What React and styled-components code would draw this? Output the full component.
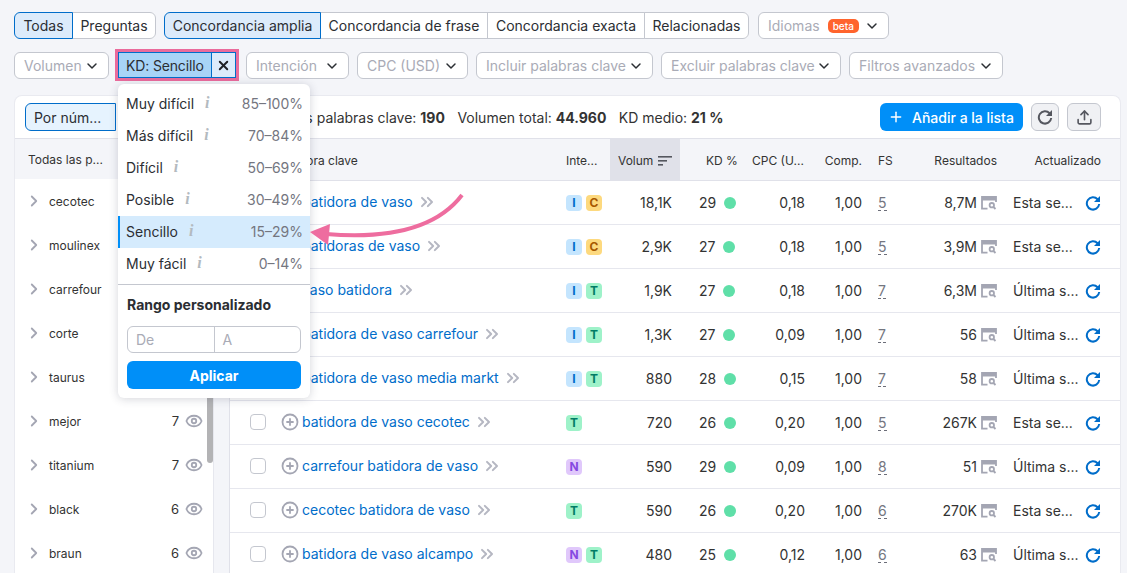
import React from 'react';
import styled, { createGlobalStyle } from 'styled-components';
import { ChevronDown, ChevronRight, ChevronsRight, CirclePlus, Eye, Plus, Upload, X } from 'lucide-react';

const GlobalStyle = createGlobalStyle`
  html, body {
    margin: 0;
    height: 573px;
    overflow: hidden;
    background: #f4f5f9;
    font-family: Inter, "Noto Sans", sans-serif;
    color: #333;
  }
  * { box-sizing: border-box; }
`;

const Page = styled.div`
  position: relative;
  width: 1127px;
  height: 573px;
  overflow: hidden;
  padding: 12px 6px 0 14px;
`;

const FilterRow = styled.div`
  display: flex;
  height: 27px;
  gap: 8px;
  margin-bottom: 13px;
`;

const Segments = styled.div`
  display: flex;
  height: 27px;
  border-radius: 6px;
  background: #fff;
`;

const Segment = styled.div`
  width: ${({ $w }) => $w}px;
  display: flex;
  align-items: center;
  justify-content: center;
  font-size: 14px;
  color: #2b2e33;
  border: 1px solid ${({ $active }) => ($active ? '#006dca' : '#c4c7cf')};
  background: ${({ $active }) => ($active ? '#dcebfb' : '#fff')};
  margin-left: -1px;
  position: relative;
  z-index: ${({ $active }) => ($active ? 1 : 0)};
  &:first-child { border-radius: 6px 0 0 6px; margin-left: 0; }
  &:last-child { border-radius: 0 6px 6px 0; }
`;

const Dropdown = styled.div`
  width: ${({ $w }) => $w}px;
  height: 27px;
  flex: none;
  display: flex;
  align-items: center;
  justify-content: space-between;
  padding: 0 2px 0 9px;
  margin-left: ${({ $ml }) => $ml || 0}px;
  font-size: 14px;
  white-space: nowrap;
  color: #a9abb6;
  background: #fff;
  border: 1px solid #c4c7cf;
  border-radius: 6px;
  svg { color: #2b2e33; flex: none; margin-right: 6px; }
`;

const Beta = styled.span`
  background: #ff642d;
  color: #fff;
  font-size: 10px;
  font-weight: 500;
  line-height: 14px;
  padding: 0 5px;
  border-radius: 5px;
  margin-left: 8px;
  margin-right: auto;
`;

const KdChip = styled.div`
  width: 118px;
  height: 26px;
  flex: none;
  display: flex;
  margin: 0 2px 0 1px;
  outline: 3px solid #ea6b9c;
  position: relative;
`;

const KdLabel = styled.div`
  flex: 1;
  display: flex;
  align-items: center;
  padding-left: 7px;
  font-size: 14px;
  letter-spacing: -0.15px;
  color: #2b2e33;
  background: #a8d4f7;
  border: 1px solid #006dca;
`;

const KdClose = styled.div`
  width: 24px;
  display: flex;
  align-items: center;
  justify-content: center;
  background: #dcebfb;
  border: 1px solid #006dca;
  border-left: none;
  color: #1f2126;
`;

const Panel = styled.div`
  height: 478px;
  margin-top: 16px;
  background: #fff;
  border-radius: 8px 8px 0 0;
  border: 1px solid #e9eaf0;
  border-bottom: none;
  display: flex;
  flex-direction: column;
`;

const Toolbar = styled.div`
  height: 43px;
  flex: none;
  display: flex;
  align-items: center;
  padding: 0 19px 0 10px;
  border-bottom: 1px solid #e0e1e9;
`;

const SortSelect = styled.div`
  width: 91px;
  height: 28px;
  display: flex;
  align-items: center;
  padding-left: 8px;
  font-size: 14px;
  color: #2b2e33;
  background: #e6f3fe;
  border: 1px solid #006dca;
  border-radius: 6px 0 0 6px;
  margin-right: 134px;
`;

const Stat = styled.span`
  font-size: 14px;
  color: #333;
  margin-right: 12.5px;
  white-space: nowrap;
  b { font-weight: 700; }
`;

const AddButton = styled.div`
  width: 143px;
  height: 28px;
  margin-left: auto;
  display: flex;
  align-items: center;
  gap: 8px;
  padding-left: 8px;
  border-radius: 6px;
  background: #008ff8;
  color: #fff;
  font-size: 14px;
  font-weight: 500;
`;

const IconButton = styled.div`
  width: ${({ $w }) => $w}px;
  height: 28px;
  margin-left: 8px;
  display: flex;
  align-items: center;
  justify-content: center;
  border: 1px solid #c4c7cf;
  border-radius: 6px;
  background: #f0f1f4;
  color: #55575f;
`;

const Body = styled.div`
  flex: 1;
  display: flex;
  min-height: 0;
  background: #f4f5f9;
`;

const Sidebar = styled.aside`
  width: 199px;
  flex: none;
  background: #fff;
  border-right: 1px solid #e6e7ee;
  position: relative;
  overflow: hidden;
`;

const SideHead = styled.div`
  height: 40px;
  display: flex;
  align-items: center;
  padding-left: 13px;
  font-size: 12px;
  color: #333;
  background: #f4f5f9;
`;

const SideRow = styled.div`
  height: 44px;
  display: flex;
  align-items: center;
  padding: 0 10px 0 10px;
  font-size: 12px;
  color: #333;
  svg { color: #a4a6b3; flex: none; }
`;

const SideLabel = styled.span`
  flex: 1;
  margin-left: 6px;
`;

const SideCount = styled.span`
  margin-right: 6px;
  font-size: 13px;
`;

const Scrollbar = styled.div`
  position: absolute;
  right: 0;
  top: 250px;
  width: 6px;
  height: 74px;
  border-radius: 3px;
  background: #b3b3b5;
`;

const Table = styled.section`
  width: 891px;
  margin-left: 15px;
  flex: none;
  background: #fff;
  border-left: 1px solid #e0e1e9;
`;

const columns = '52px 284px 44px 70px 60px 65px 57px 50px 85px 123px';

const HeadRow = styled.div`
  display: grid;
  grid-template-columns: ${columns};
  height: 42px;
  background: #f4f5f9;
  border-bottom: 1px solid #e0e1e9;
`;

const Row = styled.div`
  display: grid;
  grid-template-columns: ${columns};
  height: 44px;
  border-bottom: 1px solid #e6e7ee;
  font-size: 14px;
  color: #333;
`;

const HeadCell = styled.div`
  display: flex;
  align-items: center;
  justify-content: ${({ $right }) => ($right ? 'flex-end' : 'flex-start')};
  padding: 2px ${({ $pr }) => $pr || 0}px 0 ${({ $pl }) => $pl || 0}px;
  font-size: 12px;
  color: #333;
  white-space: nowrap;
  overflow: hidden;
  background: ${({ $sorted }) => ($sorted ? '#e0e1e9' : 'transparent')};
`;

const Cell = styled.div`
  display: flex;
  align-items: center;
  justify-content: ${({ $right }) => ($right ? 'flex-end' : 'flex-start')};
  padding: 0 ${({ $pr }) => $pr || 0}px ${({ $raised }) => ($raised ? 2 : 0)}px ${({ $pl }) => $pl || 0}px;
  gap: ${({ $gap }) => $gap || 0}px;
  white-space: nowrap;
`;

const Checkbox = styled.div`
  width: 16px;
  height: 16px;
  border: 1px solid #c4c7cf;
  border-radius: 4px;
  background: #fff;
`;

const AddIcon = styled(CirclePlus)`
  color: #a4a6b3;
  margin-left: -1px;
  flex: none;
`;

const KeywordLink = styled.span`
  color: #006dca;
  font-size: 14px;
  margin-left: 3px;
`;

const MoreIcon = styled(ChevronsRight)`
  color: #b5b7c2;
  margin-left: 4px;
`;

const SortMark = styled.svg`
  margin-left: auto;
  flex: none;
`;

const Badge = styled.span`
  width: 16px;
  height: 16px;
  display: flex;
  align-items: center;
  justify-content: center;
  border-radius: 4px;
  font-size: 12px;
  font-weight: 700;
  color: ${({ $kind }) => badgeColors[$kind][1]};
  background: ${({ $kind }) => badgeColors[$kind][0]};
`;

const Dot = styled.span`
  width: 12px;
  height: 12px;
  border-radius: 50%;
  background: #5fdfa8;
  margin-left: 8px;
`;

const SerpScore = styled.span`
  color: #74767f;
  line-height: 15px;
  border-bottom: 1px dashed #6c6e79;
`;

const UpdatedText = styled.span`
  flex: 1;
  font-size: 14px;
`;

const Popup = styled.div`
  position: absolute;
  left: 118px;
  top: 84px;
  width: 192px;
  height: 314px;
  padding-top: 4px;
  background: #fff;
  border-radius: 6px;
  box-shadow: 0 1px 10px rgba(40, 45, 70, 0.2);
  z-index: 5;
`;

const Option = styled.div`
  height: 32px;
  display: flex;
  align-items: center;
  padding: 0 7px 2px ${({ $selected }) => ($selected ? 6 : 8)}px;
  font-size: 14px;
  color: #2b2e33;
  background: ${({ $selected }) => ($selected ? '#d5ebfd' : 'transparent')};
  border-left: ${({ $selected }) => ($selected ? '2px solid #008ff8' : 'none')};
`;

const InfoMark = styled.span`
  font-family: "Liberation Serif", serif;
  font-style: italic;
  font-weight: 700;
  font-size: 16px;
  color: #b3bac0;
  margin-left: 11px;
`;

const Range = styled.span`
  margin-left: auto;
  color: #74767f;
`;

const PopupDivider = styled.div`
  height: 1px;
  margin-top: 4px;
  background: #c4c7cf;
`;

const RangeTitle = styled.div`
  padding: 11px 9px 0;
  font-size: 14px;
  line-height: 17px;
  font-weight: 700;
  color: #2b2e33;
`;

const RangeInputs = styled.div`
  display: flex;
  height: 27px;
  margin: 13px 9px 8px;
  border: 1px solid #c4c7cf;
  border-radius: 6px;
`;

const RangeInput = styled.div`
  flex: 1;
  display: flex;
  align-items: center;
  padding-left: 8px;
  font-size: 14px;
  color: #a9abb6;
  & + & { border-left: 1px solid #c4c7cf; }
`;

const Apply = styled.div`
  height: 28px;
  margin: 0 9px;
  display: flex;
  align-items: center;
  justify-content: center;
  background: #008ff8;
  border-radius: 6px;
  color: #fff;
  font-size: 14px;
  font-weight: 700;
`;

const ArrowLayer = styled.svg`
  position: absolute;
  left: 0;
  top: 0;
  z-index: 6;
  pointer-events: none;
`;

const badgeColors = {
  I: ['#c4e5fe', '#006dca'],
  C: ['#fdd97e', '#a75800'],
  T: ['#9ef2c9', '#007c65'],
  N: ['#e0c8fb', '#8649e1'],
};

const sideRows = [
  ['cecotec'],
  ['moulinex'],
  ['carrefour'],
  ['corte'],
  ['taurus'],
  ['mejor', 7],
  ['titanium', 7],
  ['black', 6],
  ['braun', 6],
];

const rows = [
  ['batidora de vaso', ['I', 'C'], '18,1K', 29, '0,18', 5, '8,7M', 'Esta se...'],
  ['batidoras de vaso', ['I', 'C'], '2,9K', 27, '0,18', 5, '3,9M', 'Esta se...'],
  ['vaso batidora', ['I', 'T'], '1,9K', 27, '0,18', 7, '6,3M', 'Última s...'],
  ['batidora de vaso carrefour', ['I', 'T'], '1,3K', 27, '0,09', 7, '56', 'Última s...'],
  ['batidora de vaso media markt', ['I', 'T'], '880', 28, '0,15', 7, '58', 'Última s...'],
  ['batidora de vaso cecotec', ['T'], '720', 26, '0,20', 5, '267K', 'Esta se...'],
  ['carrefour batidora de vaso', ['N'], '590', 29, '0,09', 8, '51', 'Última s...'],
  ['cecotec batidora de vaso', ['T'], '590', 26, '0,20', 6, '270K', 'Esta se...'],
  ['batidora de vaso alcampo', ['N', 'T'], '480', 25, '0,12', 6, '63', 'Última s...'],
];

const options = [
  ['Muy difícil', '85–100%'],
  ['Más difícil', '70–84%'],
  ['Difícil', '50–69%'],
  ['Posible', '30–49%'],
  ['Sencillo', '15–29%', true],
  ['Muy fácil', '0–14%'],
];

const RefreshIcon = ({ color, size = 16 }) => (
  <svg width={size} height={size} viewBox="0 0 16 16" fill="none">
    <path d="M12.6 4.2A6.2 6.2 0 1 0 14.2 9" stroke={color} strokeWidth="2" />
    <path d="M15 1v6H9z" fill={color} />
  </svg>
);

const SerpIcon = () => (
  <svg width="16" height="14" viewBox="0 0 16 14" fill="none" stroke="#a4a6b3" strokeWidth="1.8">
    <path d="M6.5 12.6H1V1h14v5" />
    <path d="M1 3.2h14" strokeWidth="2.6" />
    <circle cx="10.8" cy="9.2" r="2.2" />
    <path d="M12.5 11l2 2" />
  </svg>
);

const SortIcon = () => (
  <SortMark width="14" height="12" viewBox="0 0 14 12" fill="#55575f">
    <rect x="0" y="1" width="14" height="1.6" />
    <rect x="0" y="5" width="9" height="1.6" />
    <rect x="0" y="9" width="5" height="1.6" />
  </SortMark>
);

const App = () => (
  <Page>
    <GlobalStyle />
    <FilterRow>
      <Segments>
        <Segment $w={59} $active>Todas</Segment>
        <Segment $w={84}>Preguntas</Segment>
      </Segments>
      <Segments>
        <Segment $w={157} $active>Concordancia amplia</Segment>
        <Segment $w={168}>Concordancia de frase</Segment>
        <Segment $w={158}>Concordancia exacta</Segment>
        <Segment $w={105}>Relacionadas</Segment>
      </Segments>
      <Dropdown $w={131} $ml={1}>
        Idiomas<Beta>beta</Beta>
        <ChevronDown size={16} strokeWidth={2.2} />
      </Dropdown>
    </FilterRow>
    <FilterRow>
      <Dropdown $w={95}>Volumen<ChevronDown size={16} strokeWidth={2.2} /></Dropdown>
      <KdChip>
        <KdLabel>KD: Sencillo</KdLabel>
        <KdClose><X size={15} strokeWidth={3} /></KdClose>
      </KdChip>
      <Dropdown $w={103}>Intención<ChevronDown size={16} strokeWidth={2.2} /></Dropdown>
      <Dropdown $w={111}>CPC (USD)<ChevronDown size={16} strokeWidth={2.2} /></Dropdown>
      <Dropdown $w={177}>Incluir palabras clave<ChevronDown size={16} strokeWidth={2.2} /></Dropdown>
      <Dropdown $w={180}>Excluir palabras clave<ChevronDown size={16} strokeWidth={2.2} /></Dropdown>
      <Dropdown $w={154}>Filtros avanzados<ChevronDown size={16} strokeWidth={2.2} /></Dropdown>
    </FilterRow>

    <Panel>
      <Toolbar>
        <SortSelect>Por núm...</SortSelect>
        <Stat>Todas las palabras clave: <b>190</b></Stat>
        <Stat>Volumen total: <b>44.960</b></Stat>
        <Stat>KD medio: <b>21 %</b></Stat>
        <AddButton><Plus size={16} strokeWidth={2.2} />Añadir a la lista</AddButton>
        <IconButton $w={28}><RefreshIcon color="#55575f" /></IconButton>
        <IconButton $w={34}><Upload size={17} strokeWidth={2.3} /></IconButton>
      </Toolbar>
      <Body>
        <Sidebar>
          <SideHead>Todas las p...</SideHead>
          {sideRows.map(([label, count]) => (
            <SideRow key={label}>
              <ChevronRight size={18} strokeWidth={2.4} />
              <SideLabel>{label}</SideLabel>
              {count && <SideCount>{count}</SideCount>}
              {count && <Eye size={18} strokeWidth={2.4} />}
            </SideRow>
          ))}
          <Scrollbar />
        </Sidebar>
        <Table>
          <HeadRow>
            <HeadCell />
            <HeadCell>Palabra clave</HeadCell>
            <HeadCell>Inte...</HeadCell>
            <HeadCell $sorted $pl={8} $pr={8}>Volum<SortIcon /></HeadCell>
            <HeadCell $pl={26}>KD %</HeadCell>
            <HeadCell $pl={12}>CPC (U...</HeadCell>
            <HeadCell $right>Comp.</HeadCell>
            <HeadCell $pl={16}>FS</HeadCell>
            <HeadCell $right>Resultados</HeadCell>
            <HeadCell $right $pr={19}>Actualizado</HeadCell>
          </HeadRow>
          {rows.map(([keyword, intents, volume, kd, cpc, serp, results, updated]) => (
            <Row key={keyword}>
              <Cell $pl={20} $raised><Checkbox /></Cell>
              <Cell $raised>
                <AddIcon size={18} strokeWidth={2.4} />
                <KeywordLink>{keyword}</KeywordLink>
                <MoreIcon size={20} strokeWidth={2.4} />
              </Cell>
              <Cell $gap={4}>
                {intents.map((kind) => <Badge key={kind} $kind={kind}>{kind}</Badge>)}
              </Cell>
              <Cell $right $pr={8}>{volume}</Cell>
              <Cell $pl={19}>{kd}<Dot /></Cell>
              <Cell $right>{cpc}</Cell>
              <Cell $right>{'1,00'}</Cell>
              <Cell $pl={16}><SerpScore>{serp}</SerpScore></Cell>
              <Cell $right $gap={4}>{results}<SerpIcon /></Cell>
              <Cell $pl={16} $pr={19}>
                <UpdatedText>{updated}</UpdatedText>
                <RefreshIcon color="#006dca" />
              </Cell>
            </Row>
          ))}
        </Table>
      </Body>
    </Panel>

    <Popup>
      {options.map(([label, range, selected]) => (
        <Option key={label} $selected={selected}>
          {label}<InfoMark>i</InfoMark><Range>{range}</Range>
        </Option>
      ))}
      <PopupDivider />
      <RangeTitle>Rango personalizado</RangeTitle>
      <RangeInputs>
        <RangeInput>De</RangeInput>
        <RangeInput>A</RangeInput>
      </RangeInputs>
      <Apply>Aplicar</Apply>
    </Popup>

    <ArrowLayer width="1127" height="573" viewBox="0 0 1127 573">
      <path d="M462 195C440 224 398 240 326 234" fill="none" stroke="#ee6d9f" strokeWidth="4" />
      <path d="M310 232L330 224L328 245Z" fill="#ee6d9f" />
    </ArrowLayer>
  </Page>
);

export default App;
